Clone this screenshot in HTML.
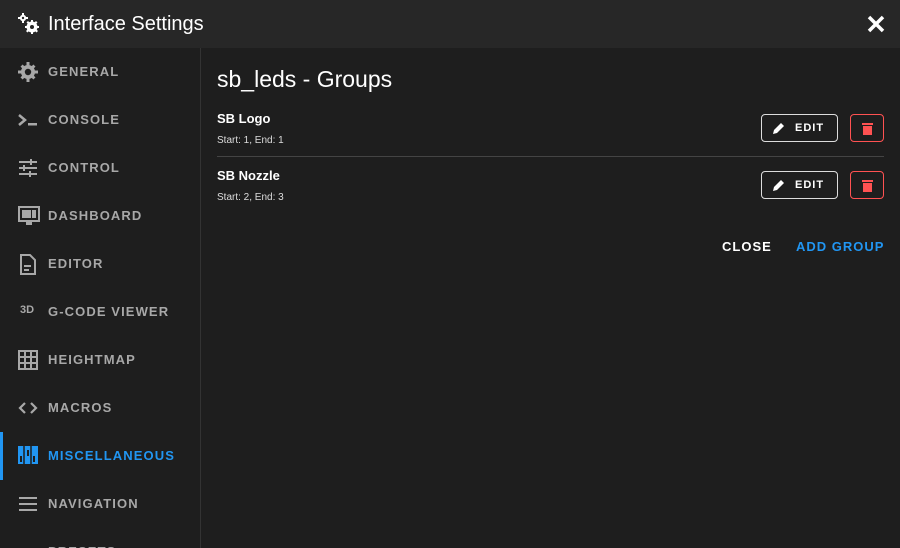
<!DOCTYPE html>
<html><head><style>
*{margin:0;padding:0;box-sizing:border-box}
html,body{width:900px;height:548px;overflow:hidden}
body{background:#1e1e1e;font-family:"Liberation Sans",sans-serif;position:relative;color:#fff}
.top{position:absolute;left:0;top:0;width:900px;height:48px;background:#272727}
.top .t{position:absolute;left:48px;top:13px;font-size:20px;color:#fff}
.side{position:absolute;left:0;top:48px;width:201px;height:500px;border-right:1px solid #333}
.it{position:absolute;left:0;height:48px;width:200px}
.it span{position:absolute;left:48px;top:16px;font-size:13px;font-weight:bold;letter-spacing:1.1px;color:#a8a8a8}
.it svg{position:absolute;left:18px;top:14px}
.act span{color:#2196f3}
.act:before{content:"";position:absolute;left:0;top:0;width:3px;height:48px;background:#2196f3}
h1{position:absolute;left:217px;top:66px;font-size:23px;font-weight:normal;white-space:nowrap}
.n{position:absolute;left:217px;font-size:13px;font-weight:bold}
.s{position:absolute;left:217px;font-size:10px;color:#ddd}
.ed{position:absolute;left:761px;width:77px;height:28px;border:1px solid #ddd;border-radius:4px;font-size:11px;font-weight:bold;letter-spacing:1px}
.ed span{position:absolute;left:33px;top:7px}
.del{position:absolute;left:850px;width:34px;height:28px;border:1px solid #ff5252;border-radius:4px}
.btn{position:absolute;top:239px;font-size:13px;font-weight:bold;letter-spacing:1px}
</style></head><body>
<div class="top">
<svg style="position:absolute;left:17px;top:12px" width="24" height="24" viewBox="0 0 24 24"><g fill="#fff"><circle cx="6" cy="6" r="3.2"/><path d="M5 1h2v10H5zM1 5h10v2H1z"/><circle cx="15" cy="15" r="5.5"/><path d="M14 8h2v14h-2zM8 14h14v2H8zM9.5 10.5l1.5-1.5 10 10-1.5 1.5zM19 9l1.5 1.5-10 10L9 19z"/></g><circle cx="6" cy="6" r="1.2" fill="#272727"/><circle cx="15" cy="15" r="2" fill="#272727"/></svg>
<div class="t">Interface Settings</div>
<svg style="position:absolute;left:867px;top:15px" width="18" height="18" viewBox="0 0 18 18"><path d="M2 2l14 14M16 2L2 16" stroke="#fff" stroke-width="3.5"/></svg>
</div>
<div class="side">
<div class="it" style="top:0"><svg width="20" height="20" viewBox="0 0 20 20"><g fill="#a8a8a8"><circle cx="10" cy="10" r="7"/><path d="M8.5 0h3v20h-3zM0 8.5h20v3H0zM2.5 4.6l2.1-2.1 12.9 12.9-2.1 2.1zM15.4 2.5l2.1 2.1L4.6 17.5l-2.1-2.1z"/></g><circle cx="10" cy="10" r="3.2" fill="#1e1e1e"/></svg><span>GENERAL</span></div>
<div class="it" style="top:48px"><svg width="20" height="20" viewBox="0 0 20 20"><path d="M1 5l6 5-6 5" stroke="#a8a8a8" stroke-width="2.5" fill="none"/><rect x="10" y="13" width="9" height="2.5" fill="#a8a8a8"/></svg><span>CONSOLE</span></div>
<div class="it" style="top:96px"><svg width="20" height="20" viewBox="0 0 20 20" stroke="#a8a8a8" stroke-width="2"><path d="M1 4h18M1 10h18M1 16h18M13 1v6M6 7v6M12 13v6"/></svg><span>CONTROL</span></div>
<div class="it" style="top:144px"><svg width="22" height="20" viewBox="0 0 22 20"><rect x="1" y="1" width="20" height="14" fill="none" stroke="#a8a8a8" stroke-width="2"/><rect x="4" y="4" width="9" height="8" fill="#a8a8a8"/><rect x="14" y="4" width="4" height="8" fill="#a8a8a8"/><rect x="8" y="16" width="6" height="3" fill="#a8a8a8"/></svg><span>DASHBOARD</span></div>
<div class="it" style="top:192px"><svg width="20" height="22" viewBox="0 0 20 22"><path d="M3 1h9l5 5v14H3z" fill="none" stroke="#a8a8a8" stroke-width="2"/><path d="M6 12h7M6 16h5" stroke="#a8a8a8" stroke-width="2"/></svg><span>EDITOR</span></div>
<div class="it" style="top:240px"><span style="left:20px;font-size:11px;letter-spacing:0">3D</span><span>G-CODE VIEWER</span></div>
<div class="it" style="top:288px"><svg width="20" height="20" viewBox="0 0 20 20" stroke="#a8a8a8" stroke-width="2" fill="none"><rect x="1" y="1" width="18" height="18"/><path d="M7 1v18M13 1v18M1 7h18M1 13h18"/></svg><span>HEIGHTMAP</span></div>
<div class="it" style="top:336px"><svg width="20" height="20" viewBox="0 0 20 20" stroke="#a8a8a8" stroke-width="2.2" fill="none"><path d="M7 5l-5 5 5 5M13 5l5 5-5 5"/></svg><span>MACROS</span></div>
<div class="it act" style="top:384px"><svg width="20" height="18" viewBox="0 0 20 18"><rect x="0" y="0" width="20" height="18" fill="#2196f3"/><path d="M6 0v18M13 0v18" stroke="#1e1e1e" stroke-width="1.5"/><rect x="2" y="10" width="2" height="6" fill="#1e1e1e"/><rect x="9" y="4" width="2" height="6" fill="#1e1e1e"/><rect x="15" y="10" width="2" height="6" fill="#1e1e1e"/></svg><span>MISCELLANEOUS</span></div>
<div class="it" style="top:432px"><svg width="20" height="20" viewBox="0 0 20 20" stroke="#a8a8a8" stroke-width="2"><path d="M1 4h18M1 10h18M1 16h18"/></svg><span>NAVIGATION</span></div>
<div class="it" style="top:480px"><span>PRESETS</span></div>
</div>
<h1>sb_leds - Groups</h1>
<div class="n" style="top:111px">SB Logo</div>
<div class="s" style="top:135px">Start: 1, End: 1</div>
<div style="position:absolute;left:217px;top:156px;width:667px;height:1px;background:#444"></div>
<div class="n" style="top:168px">SB Nozzle</div>
<div class="s" style="top:192px">Start: 2, End: 3</div>
<div class="ed" style="top:114px"><svg style="position:absolute;left:10px;top:7px" width="13" height="13" viewBox="0 0 13 13"><path d="M1 12l1-4 7-7 3 3-7 7z" fill="#fff"/></svg><span>EDIT</span></div>
<div class="del" style="top:114px"><svg style="position:absolute;left:11px;top:7px" width="11" height="13" viewBox="0 0 11 13"><rect x="0" y="1" width="11" height="2" fill="#ff5252"/><rect x="1" y="4" width="9" height="9" fill="#ff5252"/></svg></div>
<div class="ed" style="top:171px"><svg style="position:absolute;left:10px;top:7px" width="13" height="13" viewBox="0 0 13 13"><path d="M1 12l1-4 7-7 3 3-7 7z" fill="#fff"/></svg><span>EDIT</span></div>
<div class="del" style="top:171px"><svg style="position:absolute;left:11px;top:7px" width="11" height="13" viewBox="0 0 11 13"><rect x="0" y="1" width="11" height="2" fill="#ff5252"/><rect x="1" y="4" width="9" height="9" fill="#ff5252"/></svg></div>
<div class="btn" style="left:722px">CLOSE</div>
<div class="btn" style="left:796px;color:#2196f3">ADD GROUP</div>
</body></html>
